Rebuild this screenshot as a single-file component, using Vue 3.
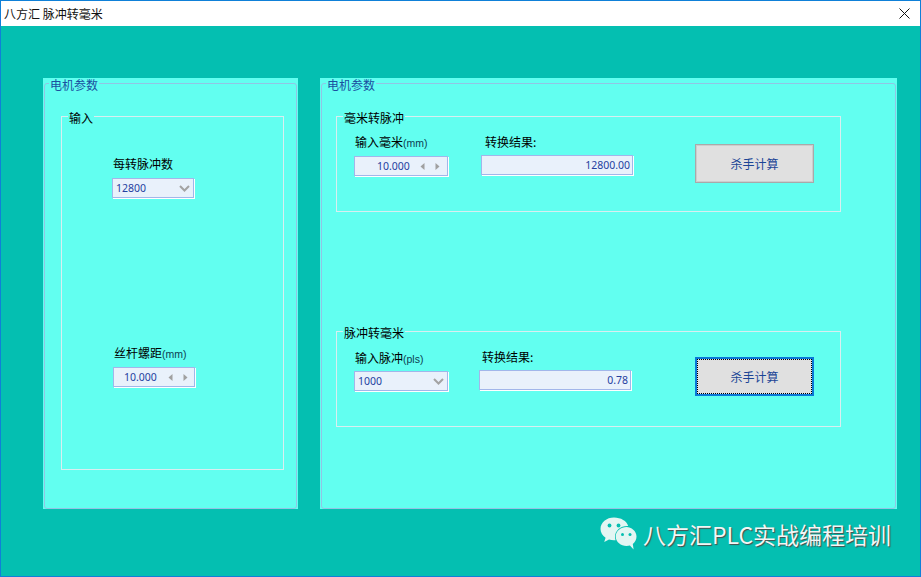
<script setup>
const wm = '八方汇PLC实战编程培训'
</script>

<template>
  <div class="window">
    <header class="titlebar">
      <span class="title">八方汇 脉冲转毫米</span>
      <svg class="close" width="11" height="11" viewBox="0 0 11 11"><path d="M0.5 0.5L10.5 10.5M10.5 0.5L0.5 10.5" stroke="#111" stroke-width="1" fill="none"/></svg>
    </header>
    <main class="client">
      <section class="panel panel-left">
        <div class="frame">
          <div class="frame-legend">电机参数</div>
          <div class="group group-input">
            <div class="legend">输入</div>
            <div class="stack stack-a">
              <div class="label">每转脉冲数</div>
              <div class="field field-left sel">
                <span class="val">12800</span>
                <svg class="chev" width="11" height="7" viewBox="0 0 11 7"><path d="M1 1L5.5 5.5L10 1" stroke="#a3a3a3" stroke-width="2" fill="none"/></svg>
              </div>
            </div>
            <div class="stack stack-b">
              <div class="label">丝杆螺距<span class="latin">(mm)</span></div>
              <div class="field field-left spin">
                <span class="val num">10.000</span>
                <span class="arrows">
                  <svg width="5" height="7" viewBox="0 0 5 7"><path d="M4.5 0V7L0.5 3.5Z" fill="#a0a0a0"/></svg>
                  <svg width="5" height="7" viewBox="0 0 5 7"><path d="M0.5 0V7L4.5 3.5Z" fill="#a0a0a0"/></svg>
                </span>
              </div>
            </div>
          </div>
        </div>
      </section>
      <section class="panel panel-right">
        <div class="frame">
          <div class="frame-legend">电机参数</div>
          <div class="group group-top">
            <div class="legend">毫米转脉冲</div>
            <div class="row">
              <div class="col col-in">
                <div class="label">输入毫米<span class="latin">(mm)</span></div>
                <div class="field field-wide spin">
                  <span class="val num">10.000</span>
                  <span class="arrows">
                    <svg width="5" height="7" viewBox="0 0 5 7"><path d="M4.5 0V7L0.5 3.5Z" fill="#a0a0a0"/></svg>
                    <svg width="5" height="7" viewBox="0 0 5 7"><path d="M0.5 0V7L4.5 3.5Z" fill="#a0a0a0"/></svg>
                  </span>
                </div>
              </div>
              <div class="col col-out">
                <div class="label">转换结果:</div>
                <div class="field field-out"><span class="val">12800.00</span></div>
              </div>
              <button class="btn" type="button">杀手计算</button>
            </div>
          </div>
          <div class="group group-bottom">
            <div class="legend">脉冲转毫米</div>
            <div class="row">
              <div class="col col-in">
                <div class="label">输入脉冲<span class="latin">(pls)</span></div>
                <div class="field field-wide sel">
                  <span class="val">1000</span>
                  <svg class="chev" width="11" height="7" viewBox="0 0 11 7"><path d="M1 1L5.5 5.5L10 1" stroke="#a3a3a3" stroke-width="2" fill="none"/></svg>
                </div>
              </div>
              <div class="col col-out col-out-b">
                <div class="label">转换结果:</div>
                <div class="field field-out"><span class="val">0.78</span></div>
              </div>
              <button class="btn btn-focus" type="button"><span class="focus-ring">杀手计算</span></button>
            </div>
          </div>
        </div>
      </section>
      <div class="watermark">
        <svg width="37" height="33" viewBox="0 0 37 33">
          <path d="M14 0.5C6.5 0.5 0.5 5.4 0.5 12C0.5 15.6 2.6 18.6 5.6 20.7L4.2 25L9 22.5C10.6 23 12.2 23.3 14 23.3C14.6 23.3 15 23.3 15.6 23.2C15.2 22 15 20.9 15 19.7C15 13.6 20.5 9 27.2 9C27.5 9 27.9 9 28.2 9C26.8 4 20.9 0.5 14 0.5Z" fill="#e3f6f3"/>
          <path d="M36.5 19.5C36.5 13.9 31.2 10 26.5 10C21 10 15.7 13.9 15.7 19.5C15.7 25 21 29 26.5 29C27.7 29 28.8 28.8 29.9 28.5L33.6 32.5L32.8 27C35 25.4 36.5 22.7 36.5 19.5Z" fill="#e3f6f3"/>
          <circle cx="9.5" cy="8.5" r="1.9" fill="#04bfb1"/><circle cx="18.5" cy="8.5" r="1.9" fill="#04bfb1"/>
          <circle cx="22.5" cy="17.5" r="1.5" fill="#04bfb1"/><circle cx="30" cy="17.5" r="1.5" fill="#04bfb1"/>
        </svg>
        <span class="wm-text">{{ wm }}</span>
      </div>
    </main>
  </div>
</template>

<style>
html, body { margin: 0; padding: 0; }
</style>

<style scoped>
.window {
  width: 921px; height: 577px; box-sizing: border-box;
  border: 1px solid #0f80d8;
  display: flex; flex-direction: column; overflow: hidden;
  font-family: "Noto Sans CJK SC", "Liberation Sans", sans-serif;
  font-size: 12px; color: #000;
}
.titlebar {
  height: 25px; flex: none; background: #fff;
  display: flex; align-items: center; justify-content: space-between;
  padding: 0 10px 0 3px; box-sizing: border-box;
}
.title { line-height: 16px; color: #111; }
.close { display: block; }
.client {
  flex: 1; position: relative; background: #04bfb1;
  display: flex; align-items: flex-start; gap: 22px;
  padding: 52px 0 0 42px;
}
.panel { background: #62fff0; height: 431px; box-sizing: border-box; padding: 5px 1px 0; }
.panel-left { width: 255px; }
.panel-right { width: 577px; }
.frame {
  height: 100%; box-sizing: border-box; border: 1px solid #92c4e4;
  border-radius: 3px;
}
.frame-legend {
  width: fit-content; height: 14px; line-height: 14px; margin: -6px 0 0 4px;
  padding: 0 1px; background: #62fff0; color: #1b4fa0; font-size: 12px;
}
.group { border: 1px solid #d9eef0; box-sizing: border-box; }
.legend {
  width: fit-content; height: 14px; line-height: 14px; margin: -6px 0 0 6px;
  padding: 0 1px; background: #62fff0;
}
.group-input { width: 223px; height: 354px; margin: 24px 0 0 16px; }
.stack { margin-left: 50px; }
.stack .label { padding-left: 1px; }
.stack-a { padding-top: 32px; }
.stack-b { padding-top: 148px; margin-left: 51px; }
.label { height: 14px; line-height: 14px; white-space: nowrap; }
.latin { font-family: "Liberation Sans", sans-serif; font-size: 10.5px; color: #0d3d52; }
.field {
  box-sizing: border-box; background: #e9f1fb; border: 1px solid #a2b6ea;
  box-shadow: 1px 1px 0 #fff;
  display: flex; align-items: center; color: #25409f;
  font-family: "Noto Sans", "Liberation Sans", sans-serif; font-size: 10.5px;
}
.val { line-height: 12px; }
.field-left { width: 82px; height: 20px; margin-top: 7px; }
.sel { justify-content: space-between; padding: 0 3px; }
.spin { padding-left: 10px; }
.spin .num { flex: none; width: 36px; }
.arrows { display: flex; gap: 10px; margin-left: 8px; }
.arrows svg { display: block; }
.row { display: flex; align-items: flex-start; padding-left: 17px; }
.group-top { width: 505px; height: 96px; margin: 24px 0 0 14px; }
.group-bottom { width: 505px; height: 96px; margin: 119px 0 0 14px; }
.col-in { width: 127px; padding-top: 10px; }
.group-bottom .col-in { padding-top: 11px; }
.group-bottom .col-in .field { margin-top: 6px; }
.col-in .label { padding-left: 1px; }
.field-wide { width: 94px; height: 20px; margin-top: 7px; }
.spin.field-wide { padding-left: 22px; }
.spin.field-wide .num { width: 35px; }
.col-out { width: 214px; padding-top: 10px; }
.col-out .label { padding-left: 4px; }
.col-out-b { margin-left: -2px; width: 216px; }
.col-out-b .label { padding-left: 3px; }
.field-out { width: 152px; height: 20px; margin-top: 6px; justify-content: flex-end; padding-right: 2px; }
.btn {
  width: 119px; height: 39px; margin: 19px 0 0 0; padding: 0; box-sizing: border-box;
  background: #e0e0e0; border: 1px solid #a9a9a9; box-shadow: inset 0 0 0 1px #cdcdcd; outline: 0; color: #1b4596;
  font-family: "Noto Sans CJK SC", sans-serif; font-size: 12px;
  display: flex; align-items: center; justify-content: center;
}
.group-bottom .btn { margin-top: 17px; }
.btn-focus { border: 2px solid #0a78d7; box-shadow: none; }
.focus-ring {
  box-sizing: border-box; width: 100%; height: 100%;
  border: 1px dotted #000;
  display: flex; align-items: center; justify-content: center;
}
.watermark {
  position: absolute; left: 599px; top: 491px;
  display: flex; align-items: center; gap: 6px;
}
.watermark svg { display: block; }
.wm-text {
  font-family: "Noto Sans CJK SC", sans-serif; font-size: 23px; line-height: 30px;
  color: #f2f6f5; text-shadow: 1px 1px 1px #4a4a4a; white-space: nowrap;
}
</style>
